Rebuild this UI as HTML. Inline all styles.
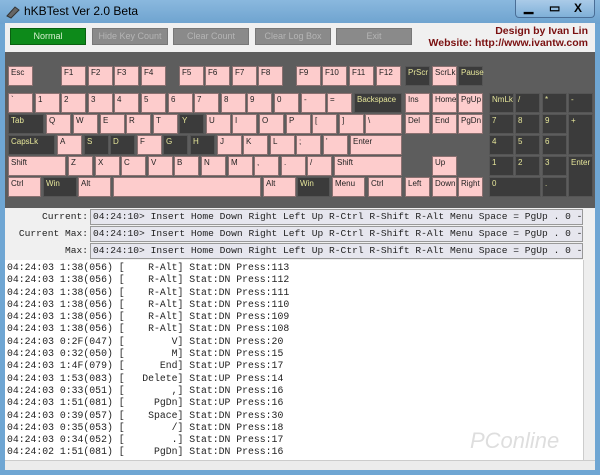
<!DOCTYPE html>
<html><head><meta charset="utf-8"><style>
*{margin:0;padding:0;box-sizing:border-box}
html,body{width:600px;height:475px;overflow:hidden}
body{background:#6fa6d3;font-family:"Liberation Sans",sans-serif;position:relative}
#title{position:absolute;left:0;top:0;width:600px;height:24px;background:linear-gradient(#8ab8de,#6ea3cf)}
#title span{position:absolute;left:24px;top:4px;font-size:12px;color:#000}
#client{position:absolute;left:5px;top:23px;width:590px;height:447px;background:#f0f0f0}
.btn{position:absolute;top:28px;height:17px;background:#8a8a8a;border:1px solid #777;color:#b5b5b5;font-size:9px;text-align:center;line-height:15px}
#kb{position:absolute;left:5px;top:52px;width:590px;height:156px;background:#5d5d5d}
.k{position:absolute;height:20px;background:#fdcccc;border:1px solid #8a7070;font-size:8px;padding:1px 2px;color:#222;line-height:9px}
.d{background:#3b3b3b;color:#e6e69a;border-color:#555}
.lab{position:absolute;left:0;width:88px;text-align:right;font:9.6px "Liberation Mono",monospace;color:#222;line-height:14px}
.fld{position:absolute;left:90px;width:493px;height:16px;background:#e6e6ee;border:1px solid #999;font:9.6px "Liberation Mono",monospace;line-height:14px;padding-left:2px;white-space:nowrap;overflow:hidden;color:#222}
#log{position:absolute;left:5px;top:260px;width:578px;height:200px;overflow:hidden;background:#fff;font:9.8px/12.3px "Liberation Mono",monospace;color:#222;padding:2px 2px;white-space:pre}
#sb{position:absolute;left:583px;top:260px;width:12px;height:200px;background:#eee;border-left:1px solid #ccc}
</style></head><body>
<div id="title"><svg style="position:absolute;left:5px;top:5px" width="15" height="14"><path d="M2 11 L10 2 L14 5 L6 13 Z" fill="#666" stroke="#333"/></svg><span>hKBTest Ver 2.0 Beta</span>
<div style="position:absolute;left:515px;top:0;width:80px;height:18px;border:1px solid #4a6e96;border-top:0;border-radius:0 0 4px 4px;background:linear-gradient(#aacbe8,#7fb0d8);font-size:11px;color:#fff;font-weight:bold"><span style="position:absolute;left:8px;top:0;font-size:12px">▁</span><span style="position:absolute;left:33px;top:1px">▭</span><span style="position:absolute;left:58px;top:1px">X</span></div></div>
<div id="client"></div>
<div class="btn" style="left:10px;width:76px;background:#0d8a1a;color:#d8f0d0;border-color:#0a6010">Normal</div>
<div class="btn" style="left:92px;width:76px">Hide Key Count</div>
<div class="btn" style="left:173px;width:76px">Clear Count</div>
<div class="btn" style="left:255px;width:76px">Clear Log Box</div>
<div class="btn" style="left:336px;width:76px">Exit</div>
<div style="position:absolute;right:12px;top:25px;text-align:right;font-size:10.5px;font-weight:bold;color:#7a1010;line-height:12px">Design by Ivan Lin<br>Website: http://www.ivantw.com</div>
<div id="kb"></div>
<div id="keys"></div>
<div class="lab" style="top:210px">Current:</div><div class="fld" style="top:209px">04:24:10&gt; Insert Home Down Right Left Up R-Ctrl R-Shift R-Alt Menu Space = PgUp . 0 -</div>
<div class="lab" style="top:227px">Current Max:</div><div class="fld" style="top:226px">04:24:10&gt; Insert Home Down Right Left Up R-Ctrl R-Shift R-Alt Menu Space = PgUp . 0 -</div>
<div class="lab" style="top:244px">Max:</div><div class="fld" style="top:243px">04:24:10&gt; Insert Home Down Right Left Up R-Ctrl R-Shift R-Alt Menu Space = PgUp . 0 -</div>
<div id="log">04:24:03 1:38(056) [    R-Alt] Stat:DN Press:113
04:24:03 1:38(056) [    R-Alt] Stat:DN Press:112
04:24:03 1:38(056) [    R-Alt] Stat:DN Press:111
04:24:03 1:38(056) [    R-Alt] Stat:DN Press:110
04:24:03 1:38(056) [    R-Alt] Stat:DN Press:109
04:24:03 1:38(056) [    R-Alt] Stat:DN Press:108
04:24:03 0:2F(047) [        V] Stat:DN Press:20
04:24:03 0:32(050) [        M] Stat:DN Press:15
04:24:03 1:4F(079) [      End] Stat:UP Press:17
04:24:03 1:53(083) [   Delete] Stat:UP Press:14
04:24:03 0:33(051) [        ,] Stat:DN Press:16
04:24:03 1:51(081) [     PgDn] Stat:UP Press:16
04:24:03 0:39(057) [    Space] Stat:DN Press:30
04:24:03 0:35(053) [        /] Stat:DN Press:18
04:24:03 0:34(052) [        .] Stat:DN Press:17
04:24:02 1:51(081) [     PgDn] Stat:DN Press:16</div>
<div id="sb"></div>
<div style="position:absolute;left:5px;top:460px;width:590px;height:10px;background:#ececec;border-top:1px solid #ccc"></div>
<div style="position:absolute;left:470px;top:428px;font-size:22px;color:rgba(200,200,200,.6);font-style:italic">PConline</div>
<script>
var K=[
[66,[["Esc",8],["F1",61],["F2",88],["F3",114],["F4",141],["F5",179],["F6",205],["F7",232],["F8",258],["F9",296],["F10",322],["F11",349],["F12",376],["PrScr",405,25,1],["ScrLk",432],["Pause",458,25,1]]],
[93,[["`",8],["1",35],["2",61],["3",88],["4",114],["5",141],["6",168],["7",194],["8",221],["9",247],["0",274],["-",301],["=",327],["Backspace",354,48,1],["Ins",405],["Home",432],["PgUp",458],["NmLk",489,25,1],["/",515,25,1],["*",542,25,1],["-",568,25,1]]],
[114,[["Tab",8,36,1],["Q",46],["W",73],["E",100],["R",126],["T",153],["Y",179,25,1],["U",206],["I",232],["O",259],["P",286],["[",312],["]",339],["\\",365,37],["Del",405],["End",432],["PgDn",458],["7",489,25,1],["8",515,25,1],["9",542,25,1],["+",568,25,1,41]]],
[135,[["CapsLk",8,47,1],["A",57],["S",84,25,1],["D",110,25,1],["F",137],["G",163,25,1],["H",190,25,1],["J",217],["K",243],["L",270],[";",296],["'",323],["Enter",350,52],["4",489,25,1],["5",515,25,1],["6",542,25,1]]],
[156,[["Shift",8,58],["Z",68],["X",95],["C",121],["V",148],["B",174],["N",201],["M",228],[",",254],[".",281],["/",307],["Shift",334,68],["Up",432],["1",489,25,1],["2",515,25,1],["3",542,25,1],["Enter",568,25,1,41]]],
[177,[["Ctrl",8,33],["Win",43,34,1],["Alt",78,33],["",113,148],["Alt",263,33],["Win",297,33,1],["Menu",332,33],["Ctrl",368,34],["Left",405],["Down",432],["Right",458],["0",489,52,1],[".",542,25,1]]]];
var h="";K.forEach(function(r){r[1].forEach(function(k){var w=k[2]||25,ht=k[4]||20;h+='<div class="k'+(k[3]?' d':'')+'" style="left:'+k[1]+'px;top:'+r[0]+'px;width:'+w+'px;height:'+ht+'px">'+k[0].replace('<','&lt;')+'</div>';});});
document.getElementById("keys").innerHTML=h;
</script>
</body></html>
